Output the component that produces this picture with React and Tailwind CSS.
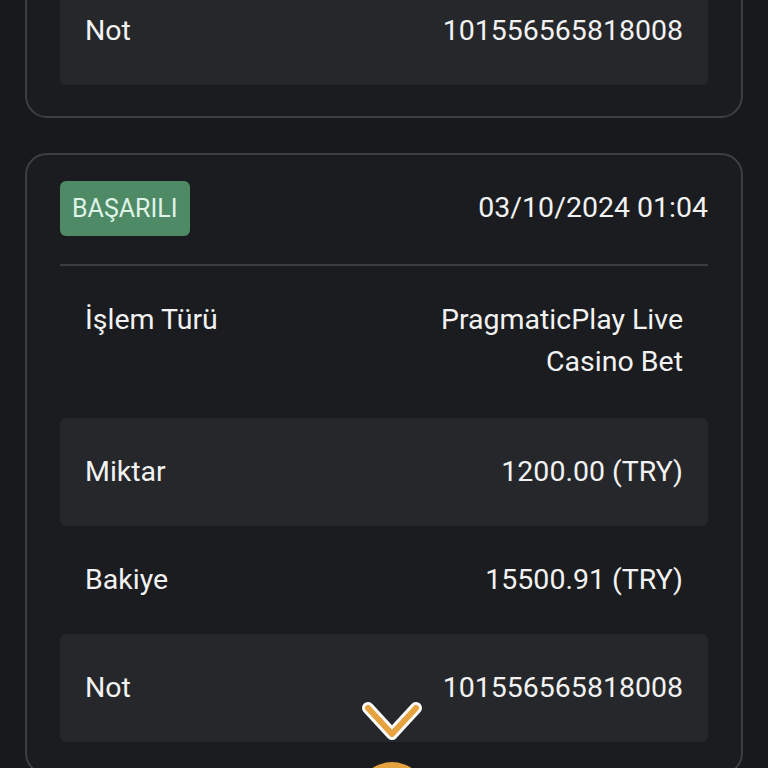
import React from "react";

const txs = [
  {
    id: 1,
    status: "BAŞARILI",
    date: "03/10/2024 01:04",
    type: ["PragmaticPlay Live", "Casino Bet"],
    amount: "1200.00 (TRY)",
    balance: "16700.91 (TRY)",
    note: "101556565818008",
  },
  {
    id: 2,
    status: "BAŞARILI",
    date: "03/10/2024 01:04",
    type: ["PragmaticPlay Live", "Casino Bet"],
    amount: "1200.00 (TRY)",
    balance: "15500.91 (TRY)",
    note: "101556565818008",
  },
];

function Row({ label, shaded, tall, children }) {
  return (
    <div
      className={
        "flex justify-between px-[25px] rounded-[6px] leading-[42px] " +
        (tall ? "pt-[33px] pb-[35px] " : "py-[33px] ") +
        (shaded ? "bg-[#25272b]" : "")
      }
    >
      <span>{label}</span>
      <span className="text-right">{children}</span>
    </div>
  );
}

function TxCard({ tx, className }) {
  return (
    <div
      className={
        "border-2 border-[#3e3f43] rounded-[22px] bg-[#1b1c1f] px-[33px] pt-[26px] pb-[31px] " +
        (className || "")
      }
    >
      <div className="flex items-center justify-between">
        <span className="h-[55px] px-[12px] flex items-center rounded-[6px] bg-[#4f8a67] text-[#dff3e6] text-[25px]">
          {tx.status}
        </span>
        <span>{tx.date}</span>
      </div>
      <div className="mt-[28px] h-[2px] bg-[#3c3d41]" />
      <Row label="İşlem Türü" tall>
        {tx.type.map((l) => (
          <div key={l}>{l}</div>
        ))}
      </Row>
      <Row label="Miktar" shaded>
        {tx.amount}
      </Row>
      <Row label="Bakiye">{tx.balance}</Row>
      <Row label="Not" shaded>
        {tx.note}
      </Row>
    </div>
  );
}

export default function App() {
  return (
    <div
      className="relative w-[768px] h-[768px] overflow-hidden bg-[#18191c] text-[#f2f2f2] text-[28.5px]"
      style={{ fontFamily: "Roboto, 'Noto Sans', sans-serif" }}
    >
      <div className="px-[25px] flex flex-col gap-[35px]">
        <TxCard tx={txs[0]} className="-mt-[504px]" />
        <TxCard tx={txs[1]} />
      </div>

      {/* scroll-down chevron and floating button */}
      <svg
        className="absolute left-[352px] top-[692px]"
        width="80"
        height="56"
        viewBox="0 0 80 56"
      >
        <polyline
          points="16,16 40,42 64,16"
          fill="none"
          stroke="#ffffff"
          strokeWidth="12"
          strokeLinecap="round"
          strokeLinejoin="round"
        />
        <polyline
          points="16,16 40,42 64,16"
          fill="none"
          stroke="#e6a23e"
          strokeWidth="6"
          strokeLinecap="round"
          strokeLinejoin="round"
        />
      </svg>
      <div className="absolute left-[357px] top-[762px] w-[70px] h-[70px] rounded-full bg-[#e6a23e]" />
    </div>
  );
}
